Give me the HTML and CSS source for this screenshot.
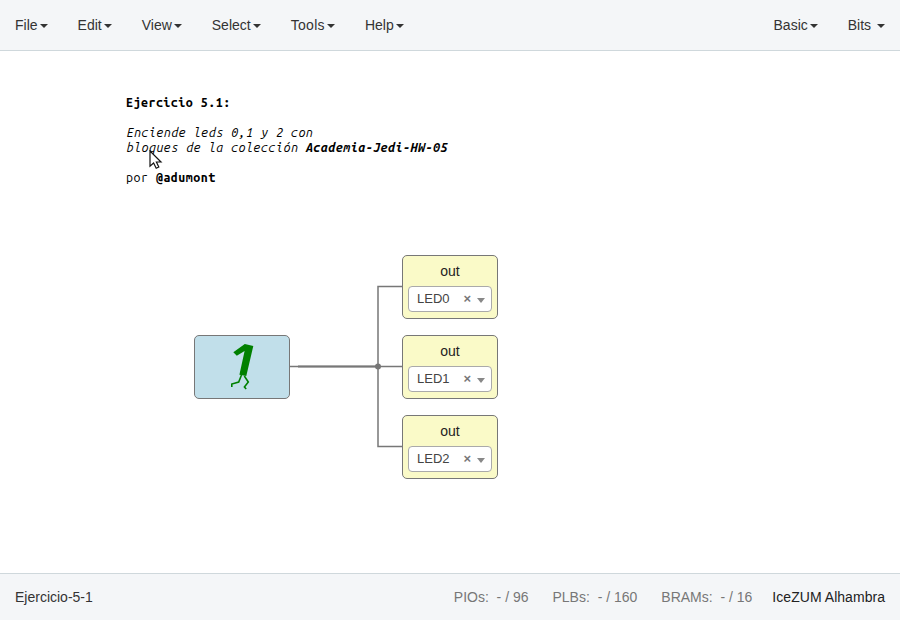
FILE: index.html
```html
<!DOCTYPE html>
<html lang="es">
<head>
<meta charset="utf-8">
<title>Ejercicio-5-1</title>
<link rel="stylesheet" href="styles.css">
</head>
<body>
<header class="navbar">
  <nav class="menu">
    <a class="item">File<b class="caret"></b></a>
    <a class="item">Edit<b class="caret"></b></a>
    <a class="item">View<b class="caret"></b></a>
    <a class="item">Select<b class="caret"></b></a>
    <a class="item tools">Tools<b class="caret"></b></a>
    <a class="item">Help<b class="caret"></b></a>
  </nav>
  <nav class="menu">
    <a class="item">Basic<b class="caret"></b></a>
    <a class="item">Bits <b class="caret"></b></a>
  </nav>
</header>
<main class="canvas">
  <div class="info"><b>Ejercicio 5.1:</b>

<i>Enciende leds 0,1 y 2 con
bloques de la colección <b>Academia-Jedi-HW-05</b></i>

por <b>@adumont</b></div>
  <svg class="wires" width="900" height="522" viewBox="0 51 900 522">
    <g fill="none" stroke="#777">
      <path d="M290 366.5H402" stroke-width="1.3"/>
      <path d="M298 366.5H378" stroke-width="2.2"/>
      <path d="M378 366V286.5H402M378 366V446.5H402" stroke-width="1.5"/>
    </g>
    <circle cx="378" cy="366.5" r="3" fill="#777"/>
  </svg>
  <div class="node one">
    <svg width="94" height="62" viewBox="195 336 94 62">
      <path d="M244.8 344L253.3 346L246.3 376L239.4 374.8L244.6 351L236.8 355.8L233.3 352.2Z" fill="#008000"/>
      <path d="M241.5 375L238.7 382L231.8 384V387M244.3 376L248.3 382L244.4 387L246.2 389" fill="none" stroke="#008000" stroke-width="1.6"/>
    </svg>
  </div>
  <div class="node out led0"><span class="label">out</span><div class="select"><span class="value">LED0</span><span class="clear">×</span><i class="arrow"></i></div></div>
  <div class="node out led1"><span class="label">out</span><div class="select"><span class="value">LED1</span><span class="clear">×</span><i class="arrow"></i></div></div>
  <div class="node out led2"><span class="label">out</span><div class="select"><span class="value">LED2</span><span class="clear">×</span><i class="arrow"></i></div></div>
  <svg class="cursor" width="14" height="20" viewBox="0 0 14 20"><path d="M1 1V16.2L4.6 13L7.2 18.2L9.8 17L7.4 12H12Z" fill="#fff" stroke="#111" stroke-width="1.2"/></svg>
</main>
<footer class="status">
  <span class="project">Ejercicio-5-1</span>
  <span class="stat">PIOs:&nbsp; - / 96</span>
  <span class="stat">PLBs:&nbsp; - / 160</span>
  <span class="stat last">BRAMs:&nbsp; - / 16</span>
  <span class="board">IceZUM Alhambra</span>
</footer>
</body>
</html>
```
FILE: styles.css
```css
* { box-sizing: border-box; }
body {
  margin: 0;
  height: 620px;
  display: flex;
  flex-direction: column;
  overflow: hidden;
  background: #fff;
  color: #333;
  font: 14px/20px "Liberation Sans", Arial, sans-serif;
}
.navbar {
  height: 51px;
  display: flex;
  justify-content: space-between;
  background: #f4f6f8;
  border-bottom: 1px solid #cfd8dc;
}
.menu { display: flex; }
.item { padding: 15px; white-space: pre; }
.caret {
  display: inline-block;
  margin-left: 2px;
  vertical-align: middle;
  border-top: 4px solid #333;
  border-left: 4px solid transparent;
  border-right: 4px solid transparent;
}
.tools { letter-spacing: 0.3px; }
.canvas { position: relative; flex: 1; }
.info {
  padding: 44px 0 0 126px;
  color: #000;
  font: 12.46px/15px "Ubuntu Mono", "DejaVu Sans Mono", monospace;
  letter-spacing: 0.5px;
  white-space: pre;
}
.wires { position: absolute; left: 0; top: 0; }
.node {
  position: absolute;
  width: 96px;
  height: 64px;
  border: 1px solid #777;
  border-radius: 5px;
}
.one { left: 194px; top: 284px; background: #c1dfea; }
.one svg { display: block; }
.out {
  left: 402px;
  padding: 5px;
  background: #fafac8;
  text-align: center;
  color: #222;
}
.led0 { top: 204px; }
.led1 { top: 284px; }
.led2 { top: 364px; }
.label { display: block; height: 25px; }
.select {
  display: flex;
  align-items: center;
  width: 84px;
  height: 26px;
  padding: 0 6px 0 8px;
  background: #fff;
  border: 1px solid #aaa;
  border-radius: 4px;
  color: #444;
  font-size: 13px;
}
.value { flex: 1; text-align: left; }
.clear { margin-right: 6px; color: #777; font-weight: bold; }
.arrow {
  margin-top: 2px;
  border-top: 5px solid #888;
  border-left: 4px solid transparent;
  border-right: 4px solid transparent;
}
.cursor { position: absolute; left: 149px; top: 99px; }
.status {
  height: 47px;
  display: flex;
  padding: 13px 15px;
  background: #f4f6f8;
  border-top: 1px solid #cfd8dc;
}
.project { flex: 1; }
.stat { margin-right: 24px; color: #777; }
.last { margin-right: 20px; }
.board { color: #222; letter-spacing: 0.04px; }
```
